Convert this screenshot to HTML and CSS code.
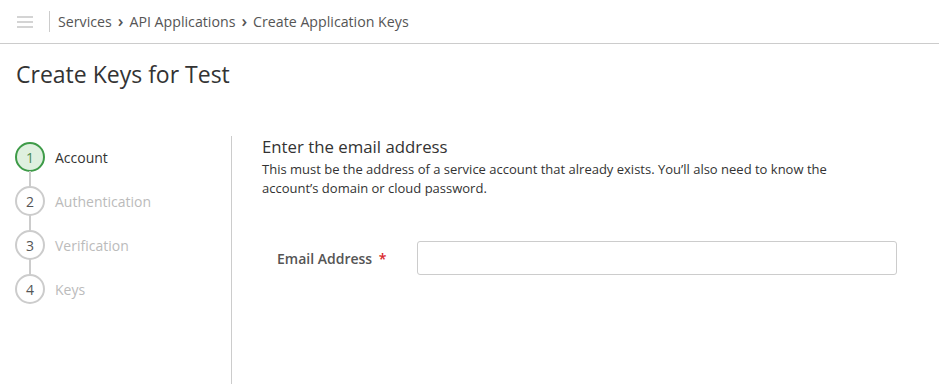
FILE: index.html
```html
<!DOCTYPE html>
<html lang="en">
<head>
  <meta charset="UTF-8">
  <title>Create Keys for Test</title>
  <link rel="stylesheet" href="styles.css">
</head>
<body>
  <div class="topbar">
    <div class="menu"><span></span><span></span><span></span></div>
    <div class="crumbs">
      <span>Services</span>
      <span class="sep">&rsaquo;</span>
      <span>API Applications</span>
      <span class="sep">&rsaquo;</span>
      <span>Create Application Keys</span>
    </div>
  </div>

  <h1 class="title">Create Keys for Test</h1>

  <div class="wizard">
    <ul class="steps">
      <li class="step active"><span class="num">1</span><span class="label">Account</span></li>
      <li class="step"><span class="num">2</span><span class="label">Authentication</span></li>
      <li class="step"><span class="num">3</span><span class="label">Verification</span></li>
      <li class="step"><span class="num">4</span><span class="label">Keys</span></li>
    </ul>

    <div class="panel">
      <h2>Enter the email address</h2>
      <p class="help">This must be the address of a service account that already exists. You’ll also need to know the account’s domain or cloud password.</p>
      <div class="field">
        <label for="email">Email Address <span class="req">*</span></label>
        <input type="text" id="email">
      </div>
    </div>
  </div>
</body>
</html>
```

FILE: styles.css
```css
body { margin: 0; font-family: "Open Sans", "Noto Sans", Arial, sans-serif; background: #fff; color: #333; }
.topbar { height: 43px; border-bottom: 1px solid #ccc; display: flex; align-items: center; }
.menu { width: 16px; margin-left: 17px; margin-right: 16px; display: flex; flex-direction: column; gap: 3px; }
.menu span { display: block; height: 2px; background: #d4d4d4; }
.crumbs { border-left: 1px solid #ccc; height: 21px; padding-left: 8px; display: flex; align-items: center; gap: 6px; font-size: 14.2px; color: #555; }
.crumbs .sep { font-size: 17px; color: #555; margin-top: -2px; font-weight: 600; }
.title { margin: 14px 0 0 16px; font-size: 23px; font-weight: 400; color: #333; line-height: 32px; }
.wizard { display: flex; margin-top: 44px; }
.steps { list-style: none; margin: 0; padding: 8px 0 0 15px; width: 216px; }
.step { display: flex; align-items: center; height: 30px; margin-bottom: 14px; position: relative; }
.step + .step::before { content: ""; position: absolute; left: 14px; top: -15px; width: 2px; height: 16px; background: #ccc; }
.num { box-sizing: border-box; width: 30px; height: 30px; border: 2px solid #ccc; border-radius: 50%; display: flex; align-items: center; justify-content: center; font-size: 14px; color: #555; background: #fff; }
.label { margin-left: 10px; font-size: 14px; color: #bbb; }
.active .num { border-color: #3e9b48; background: #dff0df; color: #4a8a50; }
.active .label { color: #333; }
.panel { border-left: 1px solid #ccc; margin-top: 2px; padding: 0 0 0 30px; height: 260px; flex: 1; }
.panel h2 { margin: 0; font-size: 16.8px; font-weight: 400; color: #333; line-height: 22px; }
.help { margin: 2px 0 0; font-size: 13px; line-height: 19px; color: #333; width: 600px; }
.field { display: flex; align-items: center; margin-top: 43px; padding-left: 15px; }
.field label { width: 140px; font-size: 14px; font-weight: 600; color: #555; }
.req { color: #d9262c; margin-left: 3px; }
.field input { box-sizing: border-box; width: 480px; height: 34px; border: 1px solid #ccc; border-radius: 3px; }
```
